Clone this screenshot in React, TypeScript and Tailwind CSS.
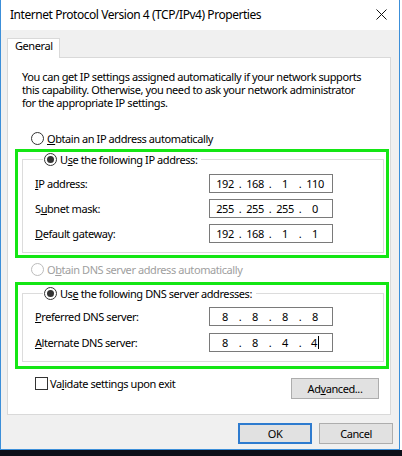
import { ReactNode } from "react";

const Radio = ({ checked, disabled }: { checked?: boolean; disabled?: boolean }) => (
  <span
    className={`inline-flex w-[13px] h-[13px] shrink-0 rounded-full border bg-white items-center justify-center ${
      disabled ? "border-[#bcbcbc]" : "border-[#333333]"
    }`}
  >
    {checked && <span className="w-[7px] h-[7px] rounded-full bg-[#333333]" />}
  </span>
);

const IpBox = ({ parts, cursor }: { parts: string[]; cursor?: boolean }) => (
  <div className="w-[124px] h-[19px] border border-[#7a7a7a] bg-white flex items-center pl-[3px]">
    {parts.map((p, i) => (
      <div key={i} className="flex">
        {i > 0 && <span className="w-[6px] text-center">.</span>}
        <span className="w-[24px] text-center">
          {p}
          {cursor && i === 3 && (
            <span className="inline-block align-middle w-px h-[13px] bg-black ml-[1px] -mt-[2px]" />
          )}
        </span>
      </div>
    ))}
  </div>
);

const Row = ({ label, parts, cursor }: { label: ReactNode; parts: string[]; cursor?: boolean }) => (
  <div className="flex items-center h-[19px]">
    <span className="w-[174px]">{label}</span>
    <IpBox parts={parts} cursor={cursor} />
  </div>
);

const App = () => {
  return (
    <div className="w-[402px] h-[456px] bg-white overflow-hidden text-[11px] leading-[13px] tracking-[-0.42px] text-black font-['Noto_Sans',sans-serif]">
      <div className="w-[400px] h-[450px] flex flex-col bg-[#f0f0f0] border-x border-b border-[#3c8fd9]">
        {/* title bar */}
        <div className="h-[30px] shrink-0 bg-white flex items-center justify-between pl-[9px] pr-[12px] pb-[2px] text-[12px] tracking-[-0.45px]">
          <span>Internet Protocol Version 4 (TCP/IPv4) Properties</span>
          <svg width="11" height="11" viewBox="0 0 11 11">
            <path d="M0.5 0.5 L10.5 10.5 M10.5 0.5 L0.5 10.5" stroke="#111" strokeWidth="1" />
          </svg>
        </div>

        <div className="flex-1 flex flex-col pl-[6px] pr-[8px] pt-[8px]">
          {/* tab */}
          <div className="self-start relative z-10 -mb-px w-[53px] h-[20px] border border-b-0 border-[#d9d9d9] bg-white pl-[7px]">
            General
          </div>

          {/* tab panel */}
          <div className="h-[358px] border border-[#d9d9d9] bg-white flex flex-col">
            <p className="mt-[12px] ml-[14px] whitespace-nowrap">
              You can get IP settings assigned automatically if your network supports
              <br />
              this capability. Otherwise, you need to ask your network administrator
              <br />
              for the appropriate IP settings.
            </p>

            <div className="mt-[22px] ml-[23px] h-[15px] flex items-center gap-[3px]">
              <Radio />
              <span>
                <u>O</u>btain an IP address automatically
              </span>
            </div>

            {/* green box 1 */}
            <div className="mt-[3px] ml-[7px] mr-[1px] border-[3px] border-[#14e614] pl-[4px] pr-[2px] pb-[2px]">
              <fieldset className="border border-[#dcdcdc] px-[12px] pb-[9px]">
                <legend className="ml-[8px] px-[1px] pr-[4px] h-[15px] flex items-center gap-[3px]">
                  <Radio checked />
                  <span>
                    U<u>s</u>e the following IP address:
                  </span>
                </legend>
                <div className="mt-[7px] flex flex-col gap-[6px]">
                  <Row label={<><u>I</u>P address:</>} parts={["192", "168", "1", "110"]} />
                  <Row label={<>S<u>u</u>bnet mask:</>} parts={["255", "255", "255", "0"]} />
                  <Row label={<><u>D</u>efault gateway:</>} parts={["192", "168", "1", "1"]} />
                </div>
              </fieldset>
            </div>

            <div className="mt-[4px] ml-[23px] h-[15px] flex items-center gap-[3px] text-[#a0a0a0]">
              <Radio disabled />
              <span>
                O<u>b</u>tain DNS server address automatically
              </span>
            </div>

            {/* green box 2 */}
            <div className="mt-[5px] ml-[7px] mr-[1px] border-[3px] border-[#14e614] pl-[4px] pr-[2px] pt-[1px] pb-[4px]">
              <fieldset className="border border-[#dcdcdc] px-[12px] pb-[9px]">
                <legend className="ml-[8px] px-[1px] pr-[4px] h-[15px] flex items-center gap-[3px]">
                  <Radio checked />
                  <span>
                    Us<u>e</u> the following DNS server addresses:
                  </span>
                </legend>
                <div className="mt-[6px] flex flex-col gap-[7px]">
                  <Row label={<><u>P</u>referred DNS server:</>} parts={["8", "8", "8", "8"]} />
                  <Row label={<><u>A</u>lternate DNS server:</>} parts={["8", "8", "4", "4"]} cursor />
                </div>
              </fieldset>
            </div>

            <div className="mt-[8px] ml-[27px] mr-[11px] flex justify-between items-start">
              <div className="flex items-center gap-[2px] h-[13px]">
                <span className="w-[13px] h-[13px] border border-[#333333] bg-white" />
                <span>
                  Va<u>l</u>idate settings upon exit
                </span>
              </div>
              <button className="mt-[1px] w-[88px] h-[21px] border border-[#adadad] bg-[#e1e1e1] flex items-center justify-center">
                <span>
                  Ad<u>v</u>anced...
                </span>
              </button>
            </div>
          </div>

          {/* dialog buttons */}
          <div className="mt-[8px] -mr-[2px] flex justify-end gap-[7px]">
            <button className="w-[74px] h-[21px] border-2 border-[#2e7bcf] bg-[#e1e1e1] flex items-center justify-center">
              OK
            </button>
            <button className="w-[74px] h-[21px] border border-[#adadad] bg-[#e1e1e1] flex items-center justify-center">
              Cancel
            </button>
          </div>
        </div>
      </div>
      <div className="h-[6px] bg-[#0d0f18]" />
    </div>
  );
};

export default App;
